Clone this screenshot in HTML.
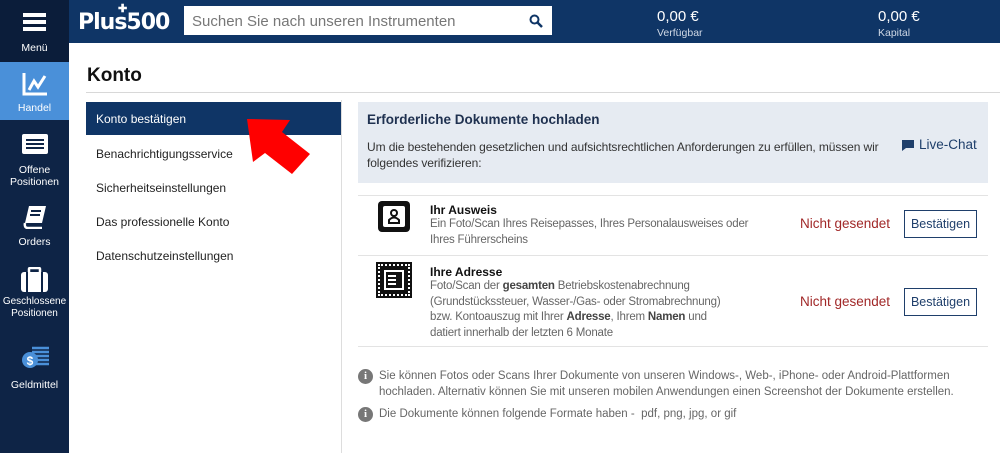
<!DOCTYPE html>
<html><head><meta charset="utf-8"><style>
*{margin:0;padding:0;box-sizing:border-box}
body{width:1000px;height:453px;overflow:hidden;background:#fff;font-family:"Liberation Sans",sans-serif;position:relative;color:#222}
.abs{position:absolute}
.side{left:0;top:0;width:69px;height:453px;background:#0e2446}
.si{position:absolute;left:0;width:69px;text-align:center;color:#fff;font-size:10.5px;line-height:12px}
.top{left:69px;top:0;width:931px;height:43px;background:#0f3566}
.nav div{position:absolute;left:96px;font-size:12px;color:#222}
.line{background:#e3e3e3;height:1px}
.small{font-size:11.5px;color:#666;line-height:15.5px}
.btn{position:absolute;left:904px;width:73px;height:28px;border:1px solid #1f3f6b;color:#1f3f6b;font-size:12.5px;text-align:center;line-height:26px}
.red{position:absolute;left:800px;color:#a12828;font-size:13.5px}
.info{position:absolute;left:358px;width:15px;height:15px;border-radius:50%;background:#777;color:#fff;font:bold 11px "Liberation Serif",serif;text-align:center;line-height:15px}
</style></head><body>
<div class="abs side"></div>
<div class="abs" style="left:0;top:0;width:69px;height:62px;background:#0b1d3a"></div>
<div class="abs" style="left:0;top:62px;width:69px;height:58px;background:#4a90d9"></div>
<div class="abs" style="left:23px;top:13px;width:23px;height:4px;background:#fff;box-shadow:0 7px 0 #fff,0 14px 0 #fff"></div>
<div class="si" style="top:42px">Menü</div>
<svg class="abs" style="left:22px;top:72px" width="26" height="24"><path d="M2 1V22H25" stroke="#fff" stroke-width="3" fill="none"/><path d="M7 18L12 9L16 15L23 4" stroke="#fff" stroke-width="3" fill="none"/></svg>
<div class="si" style="top:102px">Handel</div>
<div class="abs" style="left:22px;top:134px;width:26px;height:20px;background:#fff;border-radius:2px"></div>
<div class="abs" style="left:26px;top:139px;width:18px;height:2px;background:#0e2446;box-shadow:0 4px 0 #0e2446,0 8px 0 #0e2446"></div>
<div class="si" style="top:164px">Offene<br>Positionen</div>
<svg class="abs" style="left:22px;top:205px" width="26" height="24"><path d="M7 1H24L20 18H3Z" fill="#fff"/><path d="M3 18Q2 23 6 23H20" stroke="#fff" stroke-width="2.5" fill="none"/><path d="M9 6H19M8 10H18" stroke="#0e2446" stroke-width="2"/></svg>
<div class="si" style="top:236px">Orders</div>
<svg class="abs" style="left:21px;top:267px" width="27" height="25"><rect x="0" y="5" width="27" height="20" rx="3" fill="#fff"/><rect x="8" y="1" width="11" height="6" rx="1" fill="none" stroke="#fff" stroke-width="2.5"/><path d="M6 5V25M21 5V25" stroke="#0e2446" stroke-width="2"/></svg>
<div class="si" style="top:296px;font-size:10px">Geschlossene<br>Positionen</div>
<svg class="abs" style="left:20px;top:345px" width="30" height="24"><path d="M12 3H29M12 7H29M12 11H29M12 15H29M12 19H29" stroke="#4a90d9" stroke-width="2.5"/><circle cx="10" cy="15" r="8" fill="#4a90d9"/><text x="10" y="20" font-size="12" font-weight="bold" text-anchor="middle" fill="#fff" font-family="Liberation Sans">$</text></svg>
<div class="si" style="top:379px">Geldmittel</div>
<div class="abs top"></div>
<div class="abs" style="left:78px;top:10px;color:#fff;font:bold 22px 'DejaVu Sans',sans-serif;letter-spacing:-1px">Plus500</div>
<div class="abs" style="left:118px;top:2px;color:#fff;font:bold 11px 'Liberation Sans'">✚</div>
<div class="abs" style="left:184px;top:6px;width:368px;height:29px;background:#fff"></div>
<div class="abs" style="left:192px;top:13px;font-size:15px;color:#777">Suchen Sie nach unseren Instrumenten</div>
<svg class="abs" style="left:529px;top:14px" width="14" height="14"><circle cx="5.5" cy="5.5" r="4" stroke="#0f3566" stroke-width="2" fill="none"/><path d="M8.5 8.5L13 13" stroke="#0f3566" stroke-width="2.5"/></svg>
<div class="abs" style="left:657px;top:8px;color:#fff;font-size:15px">0,00 €</div>
<div class="abs" style="left:657px;top:27px;color:#cfd8e6;font-size:10.5px">Verfügbar</div>
<div class="abs" style="left:878px;top:8px;color:#fff;font-size:15px">0,00 €</div>
<div class="abs" style="left:878px;top:27px;color:#cfd8e6;font-size:10.5px">Kapital</div>
<div class="abs" style="left:87px;top:65px;font-size:19px;font-weight:bold;color:#111">Konto</div>
<div class="abs line" style="left:86px;top:92px;width:914px;background:#d8d8d8"></div>
<div class="abs" style="left:86px;top:102px;width:256px;height:33px;background:#0f3566"></div>
<div class="nav">
<div style="top:112px;color:#fff">Konto bestätigen</div>
<div style="top:147px">Benachrichtigungsservice</div>
<div style="top:181px">Sicherheitseinstellungen</div>
<div style="top:215px">Das professionelle Konto</div>
<div style="top:249px">Datenschutzeinstellungen</div>
</div>
<svg class="abs" style="left:0;top:0" width="340" height="200"><polygon points="247,119 290,120 282,132 310,154 292,174 265,153 253,162" fill="#f00"/></svg>
<div class="abs" style="left:341px;top:100px;width:1px;height:353px;background:#ddd"></div>
<div class="abs" style="left:358px;top:102px;width:630px;height:81px;background:#e6ebf2"></div>
<div class="abs" style="left:367px;top:112px;font-size:13.5px;font-weight:bold;color:#1f3150">Erforderliche Dokumente hochladen</div>
<div class="abs" style="left:367px;top:139px;font-size:12px;color:#333;line-height:16px;width:540px;letter-spacing:-0.1px">Um die bestehenden gesetzlichen und aufsichtsrechtlichen Anforderungen zu erfüllen, müssen wir folgendes verifizieren:</div>
<svg class="abs" style="left:901px;top:139px" width="14" height="13"><path d="M1 1H13V9H5L1 12Z" fill="#1f3f6b"/></svg>
<div class="abs" style="left:919px;top:137px;font-size:13.5px;color:#1f3f6b">Live-Chat</div>
<div class="abs line" style="left:358px;top:195px;width:630px"></div>
<div class="abs" style="left:378px;top:201px;width:32px;height:31px;background:#111;border-radius:4px"></div>
<div class="abs" style="left:383px;top:206px;width:22px;height:21px;background:#fff;border-radius:2px"></div>
<svg class="abs" style="left:386px;top:207px" width="16" height="18"><circle cx="8" cy="6" r="3" stroke="#111" stroke-width="2" fill="none"/><path d="M3 16V13Q8 8 13 13V16Z" stroke="#111" stroke-width="2" fill="none"/></svg>
<div class="abs" style="left:430px;top:203px;font-size:12px;font-weight:bold;color:#111">Ihr Ausweis</div>
<div class="abs small" style="left:430px;top:217px;width:320px;letter-spacing:-0.2px">Ein Foto/Scan Ihres Reisepasses, Ihres Personalausweises oder Ihres Führerscheins</div>
<div class="red" style="top:216px">Nicht gesendet</div>
<div class="btn" style="top:210px">Bestätigen</div>
<div class="abs line" style="left:358px;top:255px;width:630px"></div>
<div class="abs" style="left:378px;top:264px;width:32px;height:32px;background:#111;border:2px dotted #fff;outline:2px solid #111"></div>
<div class="abs" style="left:384px;top:270px;width:20px;height:20px;border:2px solid #fff"></div>
<div class="abs" style="left:388px;top:275px;width:8px;height:2px;background:#fff;box-shadow:0 4px 0 #fff,0 8px 0 #fff"></div>
<div class="abs" style="left:430px;top:265px;font-size:12px;font-weight:bold;color:#111">Ihre Adresse</div>
<div class="abs small" style="left:430px;top:279px;width:306px;letter-spacing:-0.2px">Foto/Scan der <b style="color:#444">gesamten</b> Betriebskostenabrechnung (Grundstückssteuer, Wasser-/Gas- oder Stromabrechnung) bzw. Kontoauszug mit Ihrer <b style="color:#444">Adresse</b>, Ihrem <b style="color:#444">Namen</b> und datiert innerhalb der letzten 6 Monate</div>
<div class="red" style="top:294px">Nicht gesendet</div>
<div class="btn" style="top:288px">Bestätigen</div>
<div class="abs line" style="left:358px;top:346px;width:630px"></div>
<div class="info" style="top:369px">i</div>
<div class="abs small" style="left:379px;top:369px;width:600px;font-size:11.5px">Sie können Fotos oder Scans Ihrer Dokumente von unseren Windows-, Web-, iPhone- oder Android-Plattformen hochladen. Alternativ können Sie mit unseren mobilen Anwendungen einen Screenshot der Dokumente erstellen.</div>
<div class="info" style="top:407px">i</div>
<div class="abs small" style="left:379px;top:407px;font-size:11.5px">Die Dokumente können folgende Formate haben -&nbsp; pdf, png, jpg, or gif</div>
</body></html>
